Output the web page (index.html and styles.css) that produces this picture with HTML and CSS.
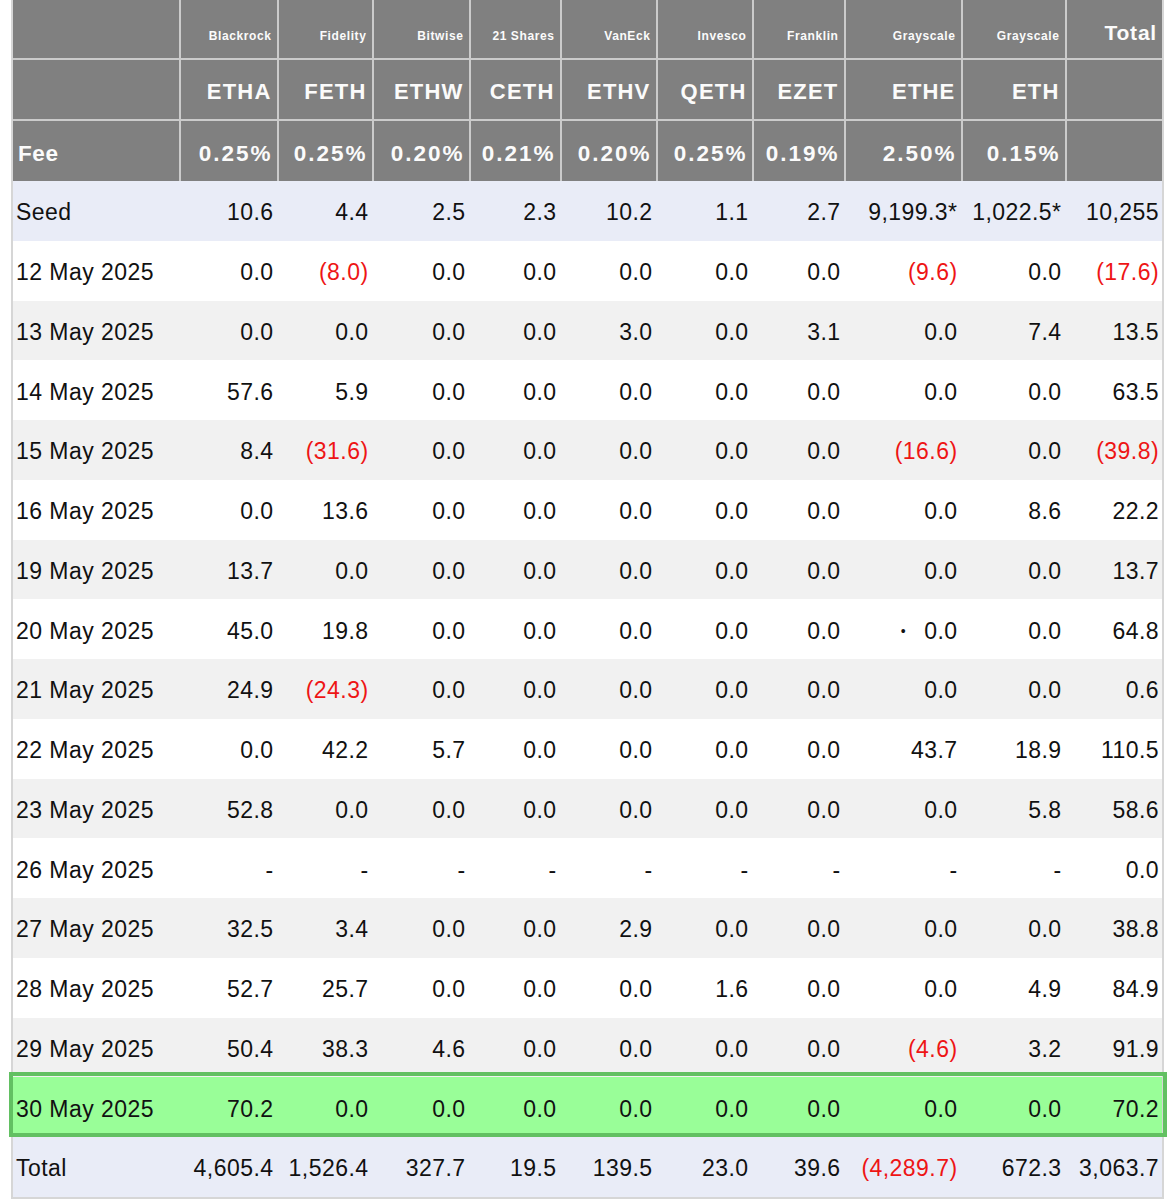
FILE: index.html
```html
<!DOCTYPE html>
<html>
<head>
<meta charset="utf-8">
<link rel="stylesheet" href="styles.css">
</head>
<body>
<div class="page">
<table class="flows">
<colgroup>
<col class="c0"><col class="c1"><col class="c2"><col class="c3"><col class="c4"><col class="c5"><col class="c6"><col class="c7"><col class="c8"><col class="c9"><col class="c10">
</colgroup>
<thead>
<tr class="h-issuer">
<th></th><th>Blackrock</th><th>Fidelity</th><th>Bitwise</th><th>21 Shares</th><th>VanEck</th><th>Invesco</th><th>Franklin</th><th>Grayscale</th><th>Grayscale</th><th class="h-total">Total</th>
</tr>
<tr class="h-ticker">
<th></th><th>ETHA</th><th>FETH</th><th>ETHW</th><th>CETH</th><th>ETHV</th><th>QETH</th><th>EZET</th><th>ETHE</th><th>ETH</th><th></th>
</tr>
<tr class="h-fee">
<th class="lbl">Fee</th><th>0.25%</th><th>0.25%</th><th>0.20%</th><th>0.21%</th><th>0.20%</th><th>0.25%</th><th>0.19%</th><th>2.50%</th><th>0.15%</th><th></th>
</tr>
</thead>
<tbody>
<tr class="r-seed"><td>Seed</td><td>10.6</td><td>4.4</td><td>2.5</td><td>2.3</td><td>10.2</td><td>1.1</td><td>2.7</td><td>9,199.3*</td><td>1,022.5*</td><td>10,255</td></tr>
<tr class="r-w"><td>12 May 2025</td><td>0.0</td><td class="neg">(8.0)</td><td>0.0</td><td>0.0</td><td>0.0</td><td>0.0</td><td>0.0</td><td class="neg">(9.6)</td><td>0.0</td><td class="neg">(17.6)</td></tr>
<tr class="r-g"><td>13 May 2025</td><td>0.0</td><td>0.0</td><td>0.0</td><td>0.0</td><td>3.0</td><td>0.0</td><td>3.1</td><td>0.0</td><td>7.4</td><td>13.5</td></tr>
<tr class="r-w"><td>14 May 2025</td><td>57.6</td><td>5.9</td><td>0.0</td><td>0.0</td><td>0.0</td><td>0.0</td><td>0.0</td><td>0.0</td><td>0.0</td><td>63.5</td></tr>
<tr class="r-g"><td>15 May 2025</td><td>8.4</td><td class="neg">(31.6)</td><td>0.0</td><td>0.0</td><td>0.0</td><td>0.0</td><td>0.0</td><td class="neg">(16.6)</td><td>0.0</td><td class="neg">(39.8)</td></tr>
<tr class="r-w"><td>16 May 2025</td><td>0.0</td><td>13.6</td><td>0.0</td><td>0.0</td><td>0.0</td><td>0.0</td><td>0.0</td><td>0.0</td><td>8.6</td><td>22.2</td></tr>
<tr class="r-g"><td>19 May 2025</td><td>13.7</td><td>0.0</td><td>0.0</td><td>0.0</td><td>0.0</td><td>0.0</td><td>0.0</td><td>0.0</td><td>0.0</td><td>13.7</td></tr>
<tr class="r-w"><td>20 May 2025</td><td>45.0</td><td>19.8</td><td>0.0</td><td>0.0</td><td>0.0</td><td>0.0</td><td>0.0</td><td><span class="dot">•</span>0.0</td><td>0.0</td><td>64.8</td></tr>
<tr class="r-g"><td>21 May 2025</td><td>24.9</td><td class="neg">(24.3)</td><td>0.0</td><td>0.0</td><td>0.0</td><td>0.0</td><td>0.0</td><td>0.0</td><td>0.0</td><td>0.6</td></tr>
<tr class="r-w"><td>22 May 2025</td><td>0.0</td><td>42.2</td><td>5.7</td><td>0.0</td><td>0.0</td><td>0.0</td><td>0.0</td><td>43.7</td><td>18.9</td><td>110.5</td></tr>
<tr class="r-g"><td>23 May 2025</td><td>52.8</td><td>0.0</td><td>0.0</td><td>0.0</td><td>0.0</td><td>0.0</td><td>0.0</td><td>0.0</td><td>5.8</td><td>58.6</td></tr>
<tr class="r-w"><td>26 May 2025</td><td>-</td><td>-</td><td>-</td><td>-</td><td>-</td><td>-</td><td>-</td><td>-</td><td>-</td><td>0.0</td></tr>
<tr class="r-g"><td>27 May 2025</td><td>32.5</td><td>3.4</td><td>0.0</td><td>0.0</td><td>2.9</td><td>0.0</td><td>0.0</td><td>0.0</td><td>0.0</td><td>38.8</td></tr>
<tr class="r-w"><td>28 May 2025</td><td>52.7</td><td>25.7</td><td>0.0</td><td>0.0</td><td>0.0</td><td>1.6</td><td>0.0</td><td>0.0</td><td>4.9</td><td>84.9</td></tr>
<tr class="r-g"><td>29 May 2025</td><td>50.4</td><td>38.3</td><td>4.6</td><td>0.0</td><td>0.0</td><td>0.0</td><td>0.0</td><td class="neg">(4.6)</td><td>3.2</td><td>91.9</td></tr>
<tr class="r-hl"><td>30 May 2025</td><td>70.2</td><td>0.0</td><td>0.0</td><td>0.0</td><td>0.0</td><td>0.0</td><td>0.0</td><td>0.0</td><td>0.0</td><td>70.2</td></tr>
<tr class="r-total"><td>Total</td><td>4,605.4</td><td>1,526.4</td><td>327.7</td><td>19.5</td><td>139.5</td><td>23.0</td><td>39.6</td><td class="neg">(4,289.7)</td><td>672.3</td><td>3,063.7</td></tr>
</tbody>
</table>
<div class="highlight"></div>
</div>
</body>
</html>
```

FILE: styles.css
```css
html, body {
  margin: 0;
  padding: 0;
  background: #ffffff;
}

.page {
  position: relative;
  padding-left: 11px;
  font-family: "Liberation Sans", Arial, sans-serif;
}

.flows {
  border-collapse: separate;
  border-spacing: 0;
  table-layout: fixed;
  width: 1153px;
  border-left: 2px solid #d6d6d6;
  border-right: 2px solid #d6d6d6;
  border-bottom: 2px solid #d6d6d6;
}

.c0 { width: 167.5px; }
.c1 { width: 98px; }
.c2 { width: 95px; }
.c3 { width: 97px; }
.c4 { width: 91px; }
.c5 { width: 96px; }
.c6 { width: 96px; }
.c7 { width: 92px; }
.c8 { width: 117px; }
.c9 { width: 104px; }
.c10 { width: 95.5px; }

thead th {
  background: #808080;
  color: #fbfbfb;
  font-weight: bold;
  text-align: right;
  padding: 0 5px 0 2px;
  border-right: 2px solid #cbcbcb;
  border-bottom: 2px solid #cbcbcb;
  white-space: nowrap;
  box-sizing: border-box;
}

thead th:last-child {
  border-right: none;
}

.h-fee th {
  border-bottom: none;
}

.h-issuer th {
  height: 60px;
  font-size: 12px;
  letter-spacing: 0.6px;
  vertical-align: baseline;
  padding-top: 22px;
  line-height: 1;
}

.h-issuer th.h-total {
  font-size: 21px;
  letter-spacing: 0.8px;
  padding-right: 5px;
}

.h-ticker th {
  height: 61px;
  font-size: 22px;
  letter-spacing: 1.2px;
  vertical-align: middle;
  padding-top: 4px;
}

.h-fee th {
  height: 60px;
  font-size: 22.5px;
  letter-spacing: 2px;
  vertical-align: middle;
  padding-top: 5px;
  padding-right: 4px;
}

.h-fee th.lbl {
  text-align: left;
  padding-left: 5px;
  letter-spacing: 0.6px;
}

tbody td {
  height: 59.75px;
  font-size: 23px;
  letter-spacing: 0.45px;
  color: #111111;
  text-align: right;
  vertical-align: middle;
  padding: 4px 5px 0 2px;
  white-space: nowrap;
  box-sizing: border-box;
}

tbody td:first-child {
  text-align: left;
  padding-left: 3px;
}

tbody td:last-child {
  padding-right: 3px;
}

.r-seed td,
.r-total td {
  background: #e9ecf7;
}

.r-w td {
  background: #ffffff;
}

.r-g td {
  background: #f1f1f1;
}

.r-hl td {
  background: #99fe98;
}

.neg {
  color: #ee1515 !important;
}

.dot {
  font-size: 14px;
  margin-right: 18px;
  vertical-align: 3px;
}

.highlight {
  position: absolute;
  left: 9px;
  top: 1072px;
  width: 1158px;
  height: 65px;
  box-sizing: border-box;
  border: 4px solid #62c062;
  pointer-events: none;
}
```
